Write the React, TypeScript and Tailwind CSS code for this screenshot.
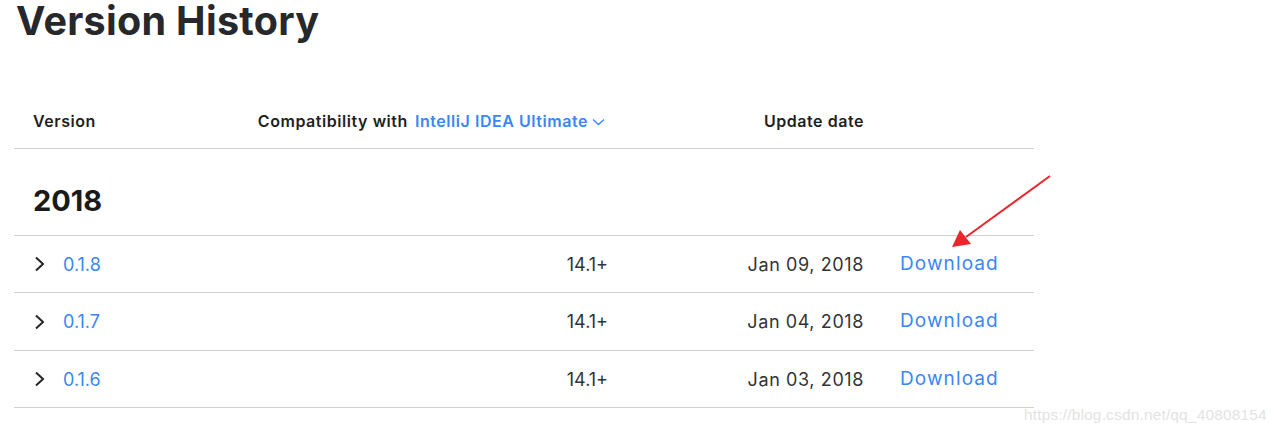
const rows = [
  { version: '0.1.8', compat: '14.1+', date: 'Jan 09, 2018' },
  { version: '0.1.7', compat: '14.1+', date: 'Jan 04, 2018' },
  { version: '0.1.6', compat: '14.1+', date: 'Jan 03, 2018' },
]

function ChevronRight() {
  return (
    <svg width="14" height="18" viewBox="0 0 14 18" fill="none" className="text-[#262626]">
      <path d="M3 2.5 L10 9 L3 15.5" stroke="currentColor" strokeWidth="2" />
    </svg>
  )
}

function ChevronDown() {
  return (
    <svg width="13" height="8" viewBox="0 0 13 8" fill="none" className="ml-[4px] mt-[2px]">
      <path d="M1 1.5 L6.5 6.5 L12 1.5" stroke="#3b86f7" strokeWidth="1.3" />
    </svg>
  )
}

export default function App() {
  return (
    <div className="relative w-[1276px] h-[432px] overflow-hidden bg-white text-[#262626]" style={{ fontFamily: 'Inter, "Open Sans", sans-serif' }}>
      {/* Title */}
      <div className="h-[62px] pl-[16px]">
        <h1 className="text-[39.5px] leading-[42px] font-bold tracking-[0.3px] text-[#27282c]">Version History</h1>
      </div>

      <div className="ml-[14px] w-[1020px]">
        {/* Header */}
        <div className="grid grid-cols-[243px_351px_256px_1fr] pt-[50px] pb-[18px] border-b border-[#d0d0d0] text-[16px] leading-[18px] font-semibold tracking-[0.55px] text-[#1f1f1f]">
          <div className="pl-[19px]">Version</div>
          <div className="flex items-center justify-end pr-[3px]">
            <span>Compatibility with</span>
            <span className="ml-[7px] text-[#3b86f7]">IntelliJ IDEA Ultimate</span>
            <ChevronDown />
          </div>
          <div className="text-right">Update date</div>
          <div />
        </div>

        {/* Year */}
        <div className="pt-[38px] pb-[20px] pl-[19px] border-b border-[#d0d0d0]">
          <div className="text-[29px] leading-[28px] font-bold text-[#1a1a1a]">2018</div>
        </div>

        {rows.map((r, i) => (
          <div
            key={r.version}
            className={`grid grid-cols-[243px_351px_256px_1fr] items-center border-b border-[#d0d0d0] text-[18px] ${i === 1 ? 'h-[58px]' : 'h-[57px]'}`}
          >
            <div className="flex items-center pl-[19px]">
              <ChevronRight />
              <span className="ml-[16px] text-[#3b86f7]">{r.version}</span>
            </div>
            <div className="text-right text-[#333]">{r.compat}</div>
            <div className="text-right text-[#333] tracking-[0.6px]">{r.date}</div>
            <div className="pl-[36px] text-[19px] tracking-[1.1px] text-[#3b86f7]">Download</div>
          </div>
        ))}
      </div>

      {/* Annotation arrow */}
      <svg className="absolute left-0 top-0 pointer-events-none" width="1276" height="432">
        <line x1="1050" y1="176" x2="966" y2="237" stroke="#e8262b" strokeWidth="2" />
        <polygon points="952,247 960,230 971,244" fill="#e8262b" />
      </svg>

      {/* Watermark */}
      <div className="absolute left-[1024px] top-[403px] text-[15.5px] tracking-[0.15px] text-[#e3e3e3]" style={{ fontFamily: '"Liberation Sans", Arial, sans-serif' }}>
        https://blog.csdn.net/qq_40808154
      </div>
    </div>
  )
}
